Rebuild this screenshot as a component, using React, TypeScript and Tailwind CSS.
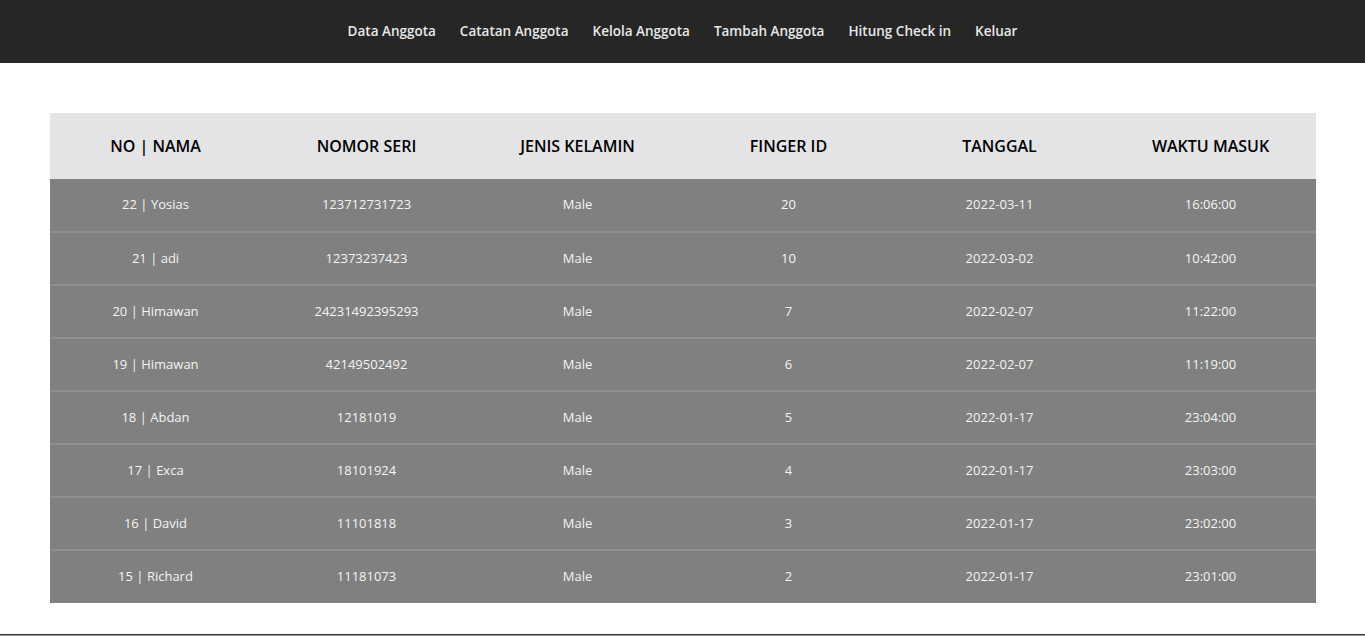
const rows = [
  { no: 22, nama: "Yosias", seri: "123712731723", jk: "Male", finger: 20, tanggal: "2022-03-11", waktu: "16:06:00" },
  { no: 21, nama: "adi", seri: "12373237423", jk: "Male", finger: 10, tanggal: "2022-03-02", waktu: "10:42:00" },
  { no: 20, nama: "Himawan", seri: "24231492395293", jk: "Male", finger: 7, tanggal: "2022-02-07", waktu: "11:22:00" },
  { no: 19, nama: "Himawan", seri: "42149502492", jk: "Male", finger: 6, tanggal: "2022-02-07", waktu: "11:19:00" },
  { no: 18, nama: "Abdan", seri: "12181019", jk: "Male", finger: 5, tanggal: "2022-01-17", waktu: "23:04:00" },
  { no: 17, nama: "Exca", seri: "18101924", jk: "Male", finger: 4, tanggal: "2022-01-17", waktu: "23:03:00" },
  { no: 16, nama: "David", seri: "11101818", jk: "Male", finger: 3, tanggal: "2022-01-17", waktu: "23:02:00" },
  { no: 15, nama: "Richard", seri: "11181073", jk: "Male", finger: 2, tanggal: "2022-01-17", waktu: "23:01:00" },
];

const menu = ["Data Anggota", "Catatan Anggota", "Kelola Anggota", "Tambah Anggota", "Hitung Check in", "Keluar"];

const headers = ["NO | NAMA", "NOMOR SERI", "JENIS KELAMIN", "FINGER ID", "TANGGAL", "WAKTU MASUK"];

const App = () => {
  return (
    <div className="min-h-[636px] bg-white flex flex-col" style={{ fontFamily: "'Open Sans', 'Noto Sans', sans-serif" }}>
      {/* Navbar */}
      <nav className="h-[63px] bg-[#262627] flex items-center justify-center gap-[24px]">
        {menu.map((m) => (
          <a key={m} href="#" className="text-[#e8e8e8] text-[13.5px] font-semibold">{m}</a>
        ))}
      </nav>

      {/* Table */}
      <div className="pl-[50px] pr-[49px] pt-[50px] pb-[31px]">
        <table className="w-full table-fixed border-collapse">
          <thead>
            <tr className="bg-[#e4e4e6] h-[66px]">
              {headers.map((h) => (
                <th key={h} className="text-[16px] font-semibold text-black text-center">{h}</th>
              ))}
            </tr>
          </thead>
          <tbody>
            {rows.map((r, i) => (
              <tr key={r.no} className={"bg-[#808080] h-[53px] text-[#f4f4f4] text-[13px] text-center " + (i < rows.length - 1 ? "border-b-2 border-[#8e8e8e]" : "")}>
                <td>{r.no} | {r.nama}</td>
                <td>{r.seri}</td>
                <td>{r.jk}</td>
                <td>{r.finger}</td>
                <td>{r.tanggal}</td>
                <td>{r.waktu}</td>
              </tr>
            ))}
          </tbody>
        </table>
      </div>

      <div className="mt-auto h-[3px] border-t border-[#333] bg-[#9aa39a]" />
    </div>
  );
};

export default App;
